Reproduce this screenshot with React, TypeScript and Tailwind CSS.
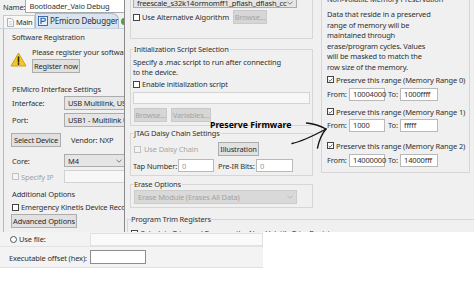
import clsx from "clsx";
import type { ReactNode } from "react";

function Box({ checked, disabled }: { checked?: boolean; disabled?: boolean }) {
  return (
    <span
      className={clsx(
        "w-[7px] h-[7px] border shrink-0 flex items-center justify-center",
        disabled ? "border-[#c2c2c2] bg-[#f4f4f4]" : "border-[#444] bg-white"
      )}
    >
      {checked && (
        <svg width="6" height="6" viewBox="0 0 6 6">
          <path d="M0.8 3.1 L2.4 4.6 L5.2 1.2" fill="none" stroke="#333" strokeWidth="0.9" />
        </svg>
      )}
    </span>
  );
}

function Btn({ children, className, disabled }: { children: ReactNode; className?: string; disabled?: boolean }) {
  return (
    <div
      className={clsx(
        "h-[14px] flex items-center justify-center border whitespace-nowrap shrink-0",
        disabled ? "bg-[#d6d6d6] border-[#cacaca] text-[#a4a4a4]" : "bg-[#e1e1e1] border-[#adadad] text-[#2a2a2a]",
        className
      )}
    >
      {children}
    </div>
  );
}

function Chevron({ color = "#606060" }: { color?: string }) {
  return (
    <svg width="6" height="4" viewBox="0 0 6 4" className="shrink-0">
      <path d="M0.5 0.8 L3 3.2 L5.5 0.8" fill="none" stroke={color} strokeWidth="0.8" />
    </svg>
  );
}

function Select({ children, className, disabled }: { children: ReactNode; className?: string; disabled?: boolean }) {
  return (
    <div
      className={clsx(
        "flex items-center justify-between border pl-[3px] pr-[3px] whitespace-nowrap overflow-hidden shrink-0",
        disabled ? "bg-[#d9d9d9] border-[#cccccc] text-[#a3a3a3]" : "bg-[#e5e5e5] border-[#acacac] text-[#2a2a2a]",
        className
      )}
    >
      <span className="overflow-hidden">{children}</span>
      <Chevron color={disabled ? "#b0b0b0" : "#606060"} />
    </div>
  );
}

function Field({ children, className }: { children?: ReactNode; className?: string }) {
  return (
    <div className={clsx("h-[13px] bg-white border border-[#b9b9b9] flex items-center pl-[3px] whitespace-nowrap shrink-0", className)}>
      {children}
    </div>
  );
}

function WarnIcon() {
  return (
    <svg width="17" height="15" viewBox="0 0 17 15">
      <path d="M8.5 1 L16 14 L1 14 Z" fill="#f6c624" stroke="#c99a10" strokeWidth="0.9" strokeLinejoin="round" />
      <path d="M8.5 5 L8.5 10" stroke="#222" strokeWidth="1.6" strokeLinecap="round" />
      <circle cx="8.5" cy="12" r="0.9" fill="#222" />
    </svg>
  );
}

function DocIcon() {
  return (
    <svg width="7" height="9" viewBox="0 0 8 10" className="shrink-0">
      <path d="M0.5 0.5 H5 L7.5 3 V9.5 H0.5 Z" fill="#fff" stroke="#8a8a8a" strokeWidth="0.8" />
      <path d="M2 4 H6 M2 5.7 H6 M2 7.4 H6" stroke="#b5b5b5" strokeWidth="0.6" />
    </svg>
  );
}

function PeIcon() {
  return (
    <svg width="10" height="10" viewBox="0 0 10 10" className="shrink-0">
      <rect x="0.5" y="0.5" width="9" height="9" fill="#e8f0fb" stroke="#2e5ea6" strokeWidth="0.9" />
      <path d="M3 8 V2.2 H5.8 Q7.4 2.2 7.4 3.8 Q7.4 5.4 5.8 5.4 H3" fill="none" stroke="#2e5ea6" strokeWidth="1.1" />
    </svg>
  );
}

const paragraph = [
  "Data that reside in a preserved",
  "range of memory will be",
  "maintained through",
  "erase/program cycles. Values",
  "will be masked to match the",
  "row size of the memory.",
];

const ranges = [
  { from: "10004000", to: "1000ffff", gap: "mt-[1px]", rowGap: "mt-[2px]" },
  { from: "1000", to: "fffff", gap: "mt-[5px]", rowGap: "mt-[1px]" },
  { from: "14000000", to: "14000fff", gap: "mt-[8px]", rowGap: "mt-[2px]" },
];

export default function App() {
  return (
    <div className="relative w-[474px] h-[282px] overflow-hidden bg-white text-[#303030] text-[7.5px] leading-[10px] font-['Noto_Sans','Open_Sans',sans-serif] tracking-[-0.15px]">
      {/* upper screenshot */}
      <div className="flex h-[232px]">
        {/* left: launch configuration */}
        <div className="w-[124px] h-[232px] overflow-hidden bg-[#f0f0f0] flex flex-col shrink-0">
          <div className="h-[14px] flex items-start shrink-0">
            <span className="ml-[3px] w-[25px] mt-[2px]">Name:</span>
            <div className="h-[14px] -mt-[1px] w-[110px] bg-white border border-[#a9a9a9] pl-[3px] flex items-center whitespace-nowrap shrink-0">
              Bootloader_Vaio Debug
            </div>
          </div>
          <div className="h-[15px] flex items-end pl-[3px] shrink-0 border-b border-[#c7d3e0]">
            <div className="h-[13px] w-[32px] border border-b-0 border-[#c9c9c9] bg-[#f7f7f7] flex items-center gap-[2px] pl-[3px] shrink-0 whitespace-nowrap tracking-[-0.3px]">
              <DocIcon />
              <span>Main</span>
            </div>
            <div className="h-[15px] w-[84px] border border-b-0 border-[#a9bcd2] rounded-tr-[7px] bg-[#d9e4f1] flex items-center gap-[2px] pl-[2px] shrink-0 text-[8px] whitespace-nowrap">
              <PeIcon />
              <span>PEmicro Debugger</span>
            </div>
            <span className="ml-[2px] mb-[3px] w-[7px] h-[7px] rounded-full bg-[#4aa33b] shrink-0" />
          </div>
          <div className="flex-1 ml-[3px] border-l border-[#b8b8b8] pl-[8px] flex flex-col whitespace-nowrap">
            <div className="mt-[2px] h-[12px] flex items-center">Software Registration</div>
            <div className="mt-[3px] flex">
              <div className="-ml-[2px] w-[22px] pt-[6px] shrink-0">
                <WarnIcon />
              </div>
              <div className="flex flex-col">
                <div className="h-[11px] flex items-center">Please register your software</div>
                <Btn className="mt-[2px] w-[48px]">Register now</Btn>
              </div>
            </div>
            <div className="mt-[10px] h-[12px] flex items-center">PEMicro Interface Settings</div>
            <div className="mt-[1px] h-[14px] flex items-center">
              <span className="w-[52px] shrink-0">Interface:</span>
              <Select className="h-[14px] w-[72px]">USB Multilink, USB Multilink FX</Select>
            </div>
            <div className="mt-[3px] h-[14px] flex items-center">
              <span className="w-[52px] shrink-0">Port:</span>
              <Select className="h-[14px] w-[72px]">USB1 - Multilink Universal</Select>
            </div>
            <div className="mt-[6px] h-[14px] flex items-center">
              <Btn className="-ml-[1px] w-[50px]">Select Device</Btn>
              <span className="ml-[10px]">Vendor: NXP</span>
            </div>
            <div className="mt-[7px] h-[13px] flex items-center">
              <span className="w-[52px] shrink-0">Core:</span>
              <Select className="h-[13px] w-[62px]">M4</Select>
            </div>
            <div className="mt-[3px] h-[13px] flex items-center">
              <span className="w-[52px] shrink-0 flex items-center gap-[2px] text-[#a3a3a3]">
                <Box disabled />
                Specify IP
              </span>
              <div className="h-[13px] w-[72px] bg-[#f7f7f7] border border-[#d2d2d2] shrink-0" />
            </div>
            <div className="mt-[5px] h-[12px] flex items-center">Additional Options</div>
            <div className="mt-[1px] h-[12px] flex items-center gap-[2px]">
              <Box />
              <span>Emergency Kinetis Device Recovery</span>
            </div>
            <Btn className="mt-[1px] -ml-[1px] w-[66px]">Advanced Options</Btn>
          </div>
        </div>

        {/* right: debugger settings window */}
        <div className="flex-1 h-[232px] border-l border-[#8a8a8a] bg-[#f0f0f0] overflow-hidden flex flex-col whitespace-nowrap">
          <div className="flex h-[214px] shrink-0">
            {/* middle column */}
            <div className="w-[193px] shrink-0 pl-[5px] pr-[5px] flex flex-col">
              <div className="-mt-[10px] h-[49px] border border-[#d6d6d6] px-[2px] pt-[6px] flex flex-col shrink-0">
                <Select className="h-[11px] w-[164px]">freescale_s32k14ormomff1_pflash_dflash_ccp</Select>
                <div className="mt-[2px] h-[14px] flex items-center">
                  <Box />
                  <span className="ml-[2px] w-[91px] shrink-0">Use Alternative Algorithm</span>
                  <Btn disabled className="w-[34px]">Browse...</Btn>
                </div>
              </div>

              <fieldset className="mt-[5px] border border-[#d6d6d6] px-[2px] pb-[3px] shrink-0">
                <legend className="leading-[11px] px-[1px]">Initialization Script Selection</legend>
                <div className="pt-[2px] leading-[10px]">
                  Specify a .mac script to run after connecting
                  <br />
                  to the device.
                </div>
                <div className="mt-[1px] h-[12px] flex items-center gap-[2px]">
                  <Box />
                  <span>Enable initialization script</span>
                </div>
                <div className="mt-[2px] h-[12px] bg-[#f7f7f7] border border-[#d4d4d4]" />
                <div className="mt-[4px] flex gap-[4px] ml-[1px]">
                  <Btn disabled className="w-[33px]">Browse...</Btn>
                  <Btn disabled className="w-[40px]">Variables...</Btn>
                </div>
              </fieldset>

              <fieldset className="mt-[2px] border border-[#d6d6d6] px-[2px] pb-[3px] shrink-0">
                <legend className="leading-[11px] px-[1px]">JTAG Daisy Chain Settings</legend>
                <div className="mt-[3px] h-[14px] flex items-center">
                  <span className="ml-[1px]">
                    <Box disabled />
                  </span>
                  <span className="ml-[3px] w-[74px] shrink-0 text-[#a6a6a6]">Use Daisy Chain</span>
                  <Btn className="w-[41px]">Illustration</Btn>
                </div>
                <div className="mt-[3px] h-[13px] flex items-center">
                  <span className="w-[45px] shrink-0">Tap Number:</span>
                  <Field className="w-[36px] text-[#9a9a9a]">0</Field>
                  <span className="ml-[4px] w-[38px] shrink-0">Pre-IR Bits:</span>
                  <Field className="w-[37px] text-[#9a9a9a]">0</Field>
                </div>
              </fieldset>

              <fieldset className="mt-[3px] border border-[#d6d6d6] px-[2px] pb-[3px] shrink-0">
                <legend className="leading-[11px] px-[1px]">Erase Options</legend>
                <Select disabled className="h-[14px] w-[163px] ml-[1px]">
                  Erase Module (Erases All Data)
                </Select>
              </fieldset>
            </div>

            {/* right column */}
            <div className="flex-1 pl-[3px] pr-[4px]">
              <fieldset className="-mt-[6px] border border-[#d6d6d6] pl-[5px] pb-[5px]">
                <legend className="leading-[11px]">Non-Volatile Memory Preservation</legend>
                <div className="pt-[4px] leading-[10.6px]">
                  {paragraph.map((line) => (
                    <div key={line}>{line}</div>
                  ))}
                </div>
                {ranges.map((r, i) => (
                  <div key={r.from}>
                    <div className={clsx("h-[12px] flex items-center gap-[2px]", r.gap)}>
                      <Box checked />
                      <span>Preserve this range (Memory Range {i})</span>
                    </div>
                    <div className={clsx("h-[13px] flex items-center", r.rowGap)}>
                      <span className="w-[22px] shrink-0">From:</span>
                      <Field className="w-[36px]">{r.from}</Field>
                      <span className="ml-[3px] w-[12px] shrink-0">To:</span>
                      <Field className="w-[38px]">{r.to}</Field>
                    </div>
                  </div>
                ))}
              </fieldset>
            </div>
          </div>

          <fieldset className="ml-[2px] w-[400px] border border-[#d6d6d6] pl-[3px] shrink-0">
            <legend className="leading-[11px]">Program Trim Registers</legend>
            <div className="mt-[2px] h-[12px] flex items-center gap-[2px]">
              <Box />
              <span>Calculate Trim and Program the Non-Volatile Trim Registers</span>
            </div>
          </fieldset>
        </div>
      </div>

      {/* lower snippet */}
      <div className="w-[263px] h-[36px] bg-[#f3f3f3] border-b border-[#e0e0e0] flex flex-col whitespace-nowrap">
        <div className="h-[15px] flex items-center border-b border-[#e3e3e3] shrink-0">
          <span className="ml-[10px] w-[7px] h-[7px] rounded-full border border-[#555] bg-white shrink-0" />
          <span className="ml-[2px] w-[71px] shrink-0">Use file:</span>
          <div className="h-[13px] flex-1 bg-[#fafafa] border border-[#e1e1e1]" />
        </div>
        <div className="flex-1 flex items-center">
          <span className="ml-[9px] w-[81px] shrink-0 mt-[2px]">Executable offset (hex):</span>
          <div className="h-[14px] w-[56px] bg-white border border-[#8d8d8d] shrink-0" />
        </div>
      </div>

      {/* annotation */}
      <div className="absolute left-[210px] top-[119px] text-[8.7px] leading-[12px] font-bold text-black tracking-normal">
        Preserve Firmware
      </div>
      <svg className="absolute left-0 top-0" width="474" height="282" viewBox="0 0 474 282">
        <g fill="none" stroke="#111" strokeWidth="1.3" strokeLinecap="round">
          <path d="M292 143.5 C302 141.5 313 136 326 129" />
          <path d="M306.5 123 Q317 124 326 129" />
          <path d="M326 129 Q320 136 317.5 148" />
        </g>
      </svg>
    </div>
  );
}
